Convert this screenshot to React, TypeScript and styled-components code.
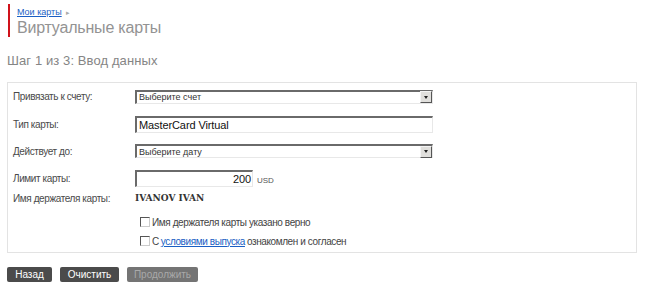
import { createGlobalStyle } from 'styled-components';
import styled from 'styled-components';

const GlobalStyle = createGlobalStyle`
  body {
    margin: 0;
    background: #fff;
    font-family: 'Liberation Sans', Arial, sans-serif;
    color: #444;
  }
`;

const Page = styled.div`
  width: 650px;
  height: 298px;
  padding: 4px 13px 0 7px;
  box-sizing: border-box;
`;

const Header = styled.header`
  border-left: 2px solid #d0121b;
  margin-left: 1px;
  padding: 3px 0 0 7px;
  height: 33px;
  box-sizing: border-box;
`;

const Crumb = styled.div`
  font-size: 9px;
  line-height: 11px;
  color: #999;

  a {
    color: #1a5fc4;
    text-decoration: underline;
  }

  span {
    font-size: 7px;
    margin-left: 4px;
    color: #aaa;
  }
`;

const Title = styled.h1`
  margin: 0;
  font-size: 16px;
  line-height: 19px;
  letter-spacing: -0.2px;
  font-weight: 400;
  color: #939393;
`;

const Step = styled.h2`
  margin: 16px 0 0;
  font-size: 13px;
  line-height: 15px;
  letter-spacing: 0.1px;
  font-weight: 400;
  color: #858585;
`;

const Panel = styled.section`
  margin-top: 14px;
  border: 1px solid #e3e3e3;
  padding: 0 0 0 5px;
  height: 171px;
  box-sizing: border-box;
`;

const Row = styled.div<{ $h: number }>`
  display: grid;
  grid-template-columns: 122px 1fr;
  align-items: center;
  height: ${(p) => p.$h}px;
`;

const Label = styled.div`
  font-size: 10px;
  letter-spacing: -0.4px;
  color: #4a4a4a;
`;

const Field = styled.div`
  display: flex;
  align-items: center;
  gap: 4px;
`;

const SelectBox = styled.div`
  width: 298px;
  height: 14px;
  box-sizing: border-box;
  border-top: 2px solid #6a6a6a;
  border-left: 2px solid #6a6a6a;
  border-right: 1px solid #e8e8e8;
  border-bottom: 1px solid #e8e8e8;
  display: flex;
  align-items: center;
  justify-content: space-between;
  font-size: 9px;
  padding-left: 2px;
  color: #333;
  background: #fff;
`;

const DropBtn = styled.div`
  width: 12px;
  height: 12px;
  box-sizing: border-box;
  background: #e0dfdc;
  border-top: 1px solid #f4f4f4;
  border-left: 1px solid #f4f4f4;
  border-right: 1px solid #555;
  border-bottom: 1px solid #555;
  display: flex;
  align-items: center;
  justify-content: center;

  &::after {
    content: '';
    border-left: 2px solid transparent;
    border-right: 2px solid transparent;
    border-top: 3px solid #222;
  }
`;

const TextBox = styled.div<{ $w: number; $right?: boolean }>`
  width: ${(p) => p.$w}px;
  height: 17px;
  box-sizing: border-box;
  border-top: 2px solid #6a6a6a;
  border-left: 2px solid #6a6a6a;
  border-right: 1px solid #e8e8e8;
  border-bottom: 1px solid #e8e8e8;
  font-size: 11px;
  line-height: 14px;
  padding: 0 1px 0 2px;
  letter-spacing: -0.1px;
  text-align: ${(p) => (p.$right ? 'right' : 'left')};
  color: #111;
`;

const Unit = styled.span`
  font-size: 8px;
  color: #555;
  margin-top: 4px;
`;

const Holder = styled.div`
  font-family: 'DejaVu Serif', serif;
  font-weight: 700;
  font-size: 9px;
  color: #333;
`;

const Checks = styled.div`
  padding-left: 127px;
  display: flex;
  flex-direction: column;
  gap: 7px;
  margin-top: 12px;
`;

const Check = styled.label`
  display: flex;
  align-items: center;
  gap: 2px;
  height: 12px;
  font-size: 10px;
  letter-spacing: -0.4px;
  color: #444;

  i {
    width: 10px;
    height: 10px;
    box-sizing: border-box;
    border-top: 1px solid #555;
    border-left: 1px solid #555;
    border-right: 1px solid #ccc;
    border-bottom: 1px solid #ccc;
    background: #fff;
  }

  a {
    color: #1a5fc4;
    text-decoration: underline;
  }
`;

const Actions = styled.div`
  display: flex;
  gap: 8px;
  margin-top: 14px;
`;

const Button = styled.button<{ $w: number }>`
  width: ${(p) => p.$w}px;
  height: 15px;
  padding: 0;
  border: none;
  border-radius: 2px;
  background: ${(p) => (p.disabled ? '#747474' : '#4b4b4b')};
  color: ${(p) => (p.disabled ? '#a9a9a9' : '#fff')};
  font-family: 'Liberation Sans', Arial, sans-serif;
  font-size: 10px;
  line-height: 15px;
`;

export default function App() {
  return (
    <>
      <GlobalStyle />
      <Page>
        <Header>
          <Crumb>
            <a href="#">Мои карты</a>
            <span>▸</span>
          </Crumb>
          <Title>Виртуальные карты</Title>
        </Header>
        <Step>Шаг 1 из 3: Ввод данных</Step>
        <Panel>
          <Row $h={27}>
            <Label>Привязать к счету:</Label>
            <Field>
              <SelectBox>
                Выберите счет
                <DropBtn />
              </SelectBox>
            </Field>
          </Row>
          <Row $h={28}>
            <Label>Тип карты:</Label>
            <Field>
              <TextBox $w={298}>MasterCard Virtual</TextBox>
            </Field>
          </Row>
          <Row $h={26}>
            <Label>Действует до:</Label>
            <Field>
              <SelectBox>
                Выберите дату
                <DropBtn />
              </SelectBox>
            </Field>
          </Row>
          <Row $h={28}>
            <Label>Лимит карты:</Label>
            <Field>
              <TextBox $w={118} $right>
                200
              </TextBox>
              <Unit>USD</Unit>
            </Field>
          </Row>
          <Row $h={12}>
            <Label>Имя держателя карты:</Label>
            <Holder>IVANOV IVAN</Holder>
          </Row>
          <Checks>
            <Check>
              <i />
              Имя держателя карты указано верно
            </Check>
            <Check>
              <i />С <a href="#">условиями выпуска</a> ознакомлен и согласен
            </Check>
          </Checks>
        </Panel>
        <Actions>
          <Button type="button" $w={45}>
            Назад
          </Button>
          <Button type="button" $w={59}>
            Очистить
          </Button>
          <Button type="button" $w={71} disabled>
            Продолжить
          </Button>
        </Actions>
      </Page>
    </>
  );
}
